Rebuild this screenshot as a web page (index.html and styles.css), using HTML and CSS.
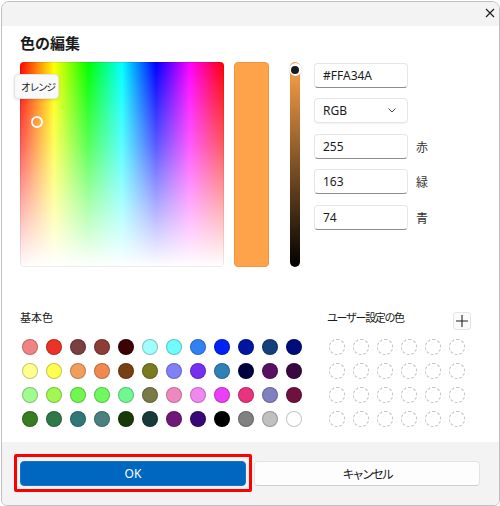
FILE: index.html
```html
<!DOCTYPE html>
<html lang="ja">
<head>
<meta charset="utf-8">
<title>色の編集</title>
<link rel="stylesheet" href="styles.css">
</head>
<body>
<div class="window">
  <div class="titlebar">
    <svg class="close" width="10" height="10" viewBox="0 0 10 10"><path d="M1 1L9 9M9 1L1 9" stroke="#1a1a1a" stroke-width="1.1" fill="none"/></svg>
  </div>
  <div class="content">
    <h1 class="title">色の編集</h1>
    <div class="main">
      <div class="spectrum">
        <div class="marker"></div>
        <div class="tooltip">オレンジ</div>
      </div>
      <div class="preview"></div>
      <div class="slider"><div class="thumb"><div class="dot"></div></div></div>
      <div class="fields">
        <div class="row"><div class="field input">#FFA34A</div></div>
        <div class="row"><div class="field select"><span>RGB</span><svg width="8" height="5" viewBox="0 0 8 5"><path d="M0.5 0.5L4 4L7.5 0.5" stroke="#444" stroke-width="1" fill="none"/></svg></div></div>
        <div class="row"><div class="field input">255</div><span class="lbl">赤</span></div>
        <div class="row"><div class="field input">163</div><span class="lbl">緑</span></div>
        <div class="row"><div class="field input">74</div><span class="lbl">青</span></div>
      </div>
    </div>
    <div class="lower">
      <div class="basic">
        <div class="sec-label">基本色</div>
        <div class="grid basic-grid">
          <span></span><span></span><span></span><span></span><span></span><span></span><span></span><span></span><span></span><span></span><span></span><span></span>
          <span></span><span></span><span></span><span></span><span></span><span></span><span></span><span></span><span></span><span></span><span></span><span></span>
          <span></span><span></span><span></span><span></span><span></span><span></span><span></span><span></span><span></span><span></span><span></span><span></span>
          <span></span><span></span><span></span><span></span><span></span><span></span><span></span><span></span><span></span><span></span><span></span><span></span>
        </div>
      </div>
      <div class="custom">
        <div class="custom-head">
          <div class="sec-label kana">ユーザー設定の色</div>
          <div class="plus"><svg width="12" height="12" viewBox="0 0 12 12"><path d="M6 0V12M0 6H12" stroke="#222" stroke-width="1.1" fill="none"/></svg></div>
        </div>
        <div class="grid custom-grid">
          <span></span><span></span><span></span><span></span><span></span><span></span>
          <span></span><span></span><span></span><span></span><span></span><span></span>
          <span></span><span></span><span></span><span></span><span></span><span></span>
          <span></span><span></span><span></span><span></span><span></span><span></span>
        </div>
      </div>
    </div>
  </div>
  <div class="footer">
    <div class="btn ok">OK</div>
    <div class="btn cancel">キャンセル</div>
  </div>
</div>
</body>
</html>
```
FILE: styles.css
```css
* { box-sizing: border-box; }
html, body { margin: 0; padding: 0; background: #fff; }
body {
  font-family: "Noto Sans", "Noto Sans CJK JP", sans-serif;
  color: #1b1b1b;
}
.window {
  margin: 1px 0 0 1px;
  width: 499px;
  height: 505px;
  border: 1px solid #bfbfbf;
  border-radius: 8px 8px 6px 6px;
  overflow: hidden;
  display: flex;
  flex-direction: column;
  background: #fff;
}
.titlebar {
  height: 24px;
  flex: none;
  background: #f3f3f3;
  display: flex;
  justify-content: flex-end;
  align-items: center;
  padding-right: 4px;
  padding-bottom: 2px;
}
.close { display: block; }
.content {
  flex: 1;
  padding: 6px 0 0 18px;
}
.title {
  margin: 0;
  font-family: "Noto Sans CJK JP", sans-serif;
  font-size: 15px;
  font-weight: 700;
  line-height: 22px;
  height: 22px;
  margin-bottom: 8px;
}
.main {
  display: flex;
  height: 205px;
}
.spectrum {
  position: relative;
  width: 204px;
  height: 205px;
  border-radius: 4px;
  background:
    linear-gradient(to bottom, rgba(255,255,255,0) 0%, rgba(255,255,255,0.35) 40%, #fff 100%),
    linear-gradient(to right, #ff0000 0%, #ffff00 16.67%, #00ff00 33.33%, #00ffff 50%, #0000ff 66.67%, #ff00ff 83.33%, #ff0000 100%);
  box-shadow: inset 0 0 0 1px rgba(0,0,0,0.07);
}
.marker {
  position: absolute;
  left: 11px;
  top: 54px;
  width: 12px;
  height: 12px;
  border: 2px solid #fff;
  border-radius: 50%;
}
.tooltip {
  position: absolute;
  left: -6px;
  top: 12px;
  width: 45px;
  height: 25px;
  background: #f9f9f9;
  border: 1px solid #e4e4e4;
  border-radius: 4px;
  box-shadow: 0 1px 3px rgba(0,0,0,0.12);
  font-family: "Noto Sans CJK JP", sans-serif;
  font-size: 10px;
  letter-spacing: -1.6px;
  white-space: nowrap;
  line-height: 23px;
  padding-left: 6px;
  color: #1b1b1b;
}
.preview {
  margin-left: 10px;
  width: 35px;
  height: 205px;
  background: #ffa34a;
  border: 1px solid #f0953f;
  border-radius: 4px;
}
.slider {
  position: relative;
  margin-left: 21px;
  width: 10px;
  height: 205px;
  border-radius: 5px;
  background: linear-gradient(to bottom, #ffa34a 0%, #000 100%);
}
.thumb {
  position: absolute;
  left: -1.5px;
  top: 1px;
  width: 13px;
  height: 13px;
  border-radius: 50%;
  background: #fff;
  box-shadow: 0 0 1px rgba(0,0,0,0.35);
  display: flex;
  align-items: center;
  justify-content: center;
}
.dot {
  width: 8px;
  height: 8px;
  border-radius: 50%;
  background: #1a1a1a;
}
.fields {
  margin-left: 14px;
  display: flex;
  flex-direction: column;
  gap: 10.4px;
  padding-top: 1px;
}
.row {
  display: flex;
  align-items: center;
  height: 25px;
}
.field {
  width: 94px;
  height: 25px;
  background: #fff;
  border: 1px solid #e6e6e6;
  border-radius: 4px;
  font-size: 12px;
  line-height: 23px;
  padding-left: 8px;
  color: #1b1b1b;
}
.input {
  border-bottom: 1px solid #8d8d8d;
}
.select {
  display: flex;
  align-items: center;
  justify-content: space-between;
  padding-right: 11px;
  box-shadow: 0 1px 1px rgba(0,0,0,0.05);
}
.select svg { display: block; }
.lbl {
  margin-left: 8px;
  font-family: "Noto Sans CJK JP", sans-serif;
  font-size: 12px;
  color: #333;
}
.lower {
  display: flex;
  margin-top: 42px;
}
.basic {
  width: 307px;
}
.sec-label {
  font-family: "Noto Sans CJK JP", sans-serif;
  font-size: 11px;
  line-height: 16px;
  height: 16px;
  white-space: nowrap;
  color: #1b1b1b;
}
.kana {
  letter-spacing: -1.4px;
}
.grid {
  display: grid;
  gap: 8px;
  margin-top: 14px;
}
.grid span {
  display: block;
  width: 16px;
  height: 16px;
  border-radius: 50%;
}
.basic-grid {
  margin-left: 2px;
  grid-template-columns: repeat(12, 16px);
}
.basic-grid span { border: 1px solid rgba(0,0,0,0.22); }
.custom {
  width: 144px;
}
.custom-head {
  display: flex;
  justify-content: space-between;
  align-items: flex-start;
  height: 21px;
}
.plus {
  margin-top: 3px;
  width: 18px;
  height: 18px;
  border: 1px solid #e5e5e5;
  border-radius: 3px;
  background: #fbfbfb;
  display: flex;
  align-items: center;
  justify-content: center;
}
.plus svg { display: block; }
.custom-grid {
  margin-top: 9px;
  margin-left: 2px;
  grid-template-columns: repeat(6, 16px);
}
.custom-grid span { border: 1px dashed #bdbdbd; }
.footer {
  flex: none;
  height: 63px;
  background: #f3f3f3;
  display: flex;
  gap: 8px;
  padding: 19px 19px 0 18px;
}
.btn {
  flex: 1;
  height: 25px;
  border-radius: 4px;
  text-align: center;
  font-size: 12px;
  line-height: 24px;
}
.ok {
  position: relative;
  background: #0067c0;
  color: #fff;
  border: 1px solid #1a74c4;
  font-family: "Noto Sans", sans-serif;
}
.ok::after {
  content: "";
  position: absolute;
  left: -7px;
  top: -8px;
  right: -7px;
  bottom: -7px;
  border: 3px solid #ff0000;
  border-radius: 2px;
}
.cancel {
  background: #fdfdfd;
  border: 1px solid #e3e3e3;
  border-bottom-color: #cfcfcf;
  font-family: "Noto Sans CJK JP", sans-serif;
  letter-spacing: -2.2px;
  color: #1b1b1b;
}

.basic-grid span:nth-child(1) { background: #f08482; }
.basic-grid span:nth-child(2) { background: #ea3326; }
.basic-grid span:nth-child(3) { background: #7a3f3f; }
.basic-grid span:nth-child(4) { background: #8b3d36; }
.basic-grid span:nth-child(5) { background: #3c0204; }
.basic-grid span:nth-child(6) { background: #a0fcfd; }
.basic-grid span:nth-child(7) { background: #70fbfd; }
.basic-grid span:nth-child(8) { background: #3380f5; }
.basic-grid span:nth-child(9) { background: #0022f5; }
.basic-grid span:nth-child(10) { background: #0016a1; }
.basic-grid span:nth-child(11) { background: #133f7b; }
.basic-grid span:nth-child(12) { background: #000c7b; }
.basic-grid span:nth-child(13) { background: #ffff90; }
.basic-grid span:nth-child(14) { background: #ffff50; }
.basic-grid span:nth-child(15) { background: #f09d5e; }
.basic-grid span:nth-child(16) { background: #f08850; }
.basic-grid span:nth-child(17) { background: #784012; }
.basic-grid span:nth-child(18) { background: #7a7a20; }
.basic-grid span:nth-child(19) { background: #8080f8; }
.basic-grid span:nth-child(20) { background: #7530f0; }
.basic-grid span:nth-child(21) { background: #3080b8; }
.basic-grid span:nth-child(22) { background: #000040; }
.basic-grid span:nth-child(23) { background: #581060; }
.basic-grid span:nth-child(24) { background: #3a0840; }
.basic-grid span:nth-child(25) { background: #a0fc90; }
.basic-grid span:nth-child(26) { background: #a0f850; }
.basic-grid span:nth-child(27) { background: #70f850; }
.basic-grid span:nth-child(28) { background: #70f860; }
.basic-grid span:nth-child(29) { background: #70f890; }
.basic-grid span:nth-child(30) { background: #7a7a48; }
.basic-grid span:nth-child(31) { background: #f088c0; }
.basic-grid span:nth-child(32) { background: #f088f0; }
.basic-grid span:nth-child(33) { background: #ea3ff6; }
.basic-grid span:nth-child(34) { background: #ea3380; }
.basic-grid span:nth-child(35) { background: #8080c0; }
.basic-grid span:nth-child(36) { background: #701040; }
.basic-grid span:nth-child(37) { background: #377d22; }
.basic-grid span:nth-child(38) { background: #307848; }
.basic-grid span:nth-child(39) { background: #307878; }
.basic-grid span:nth-child(40) { background: #4a8080; }
.basic-grid span:nth-child(41) { background: #173a08; }
.basic-grid span:nth-child(42) { background: #163a3a; }
.basic-grid span:nth-child(43) { background: #701878; }
.basic-grid span:nth-child(44) { background: #380878; }
.basic-grid span:nth-child(45) { background: #000000; }
.basic-grid span:nth-child(46) { background: #808080; }
.basic-grid span:nth-child(47) { background: #c0c0c0; }
.basic-grid span:nth-child(48) { background: #ffffff; }
```
